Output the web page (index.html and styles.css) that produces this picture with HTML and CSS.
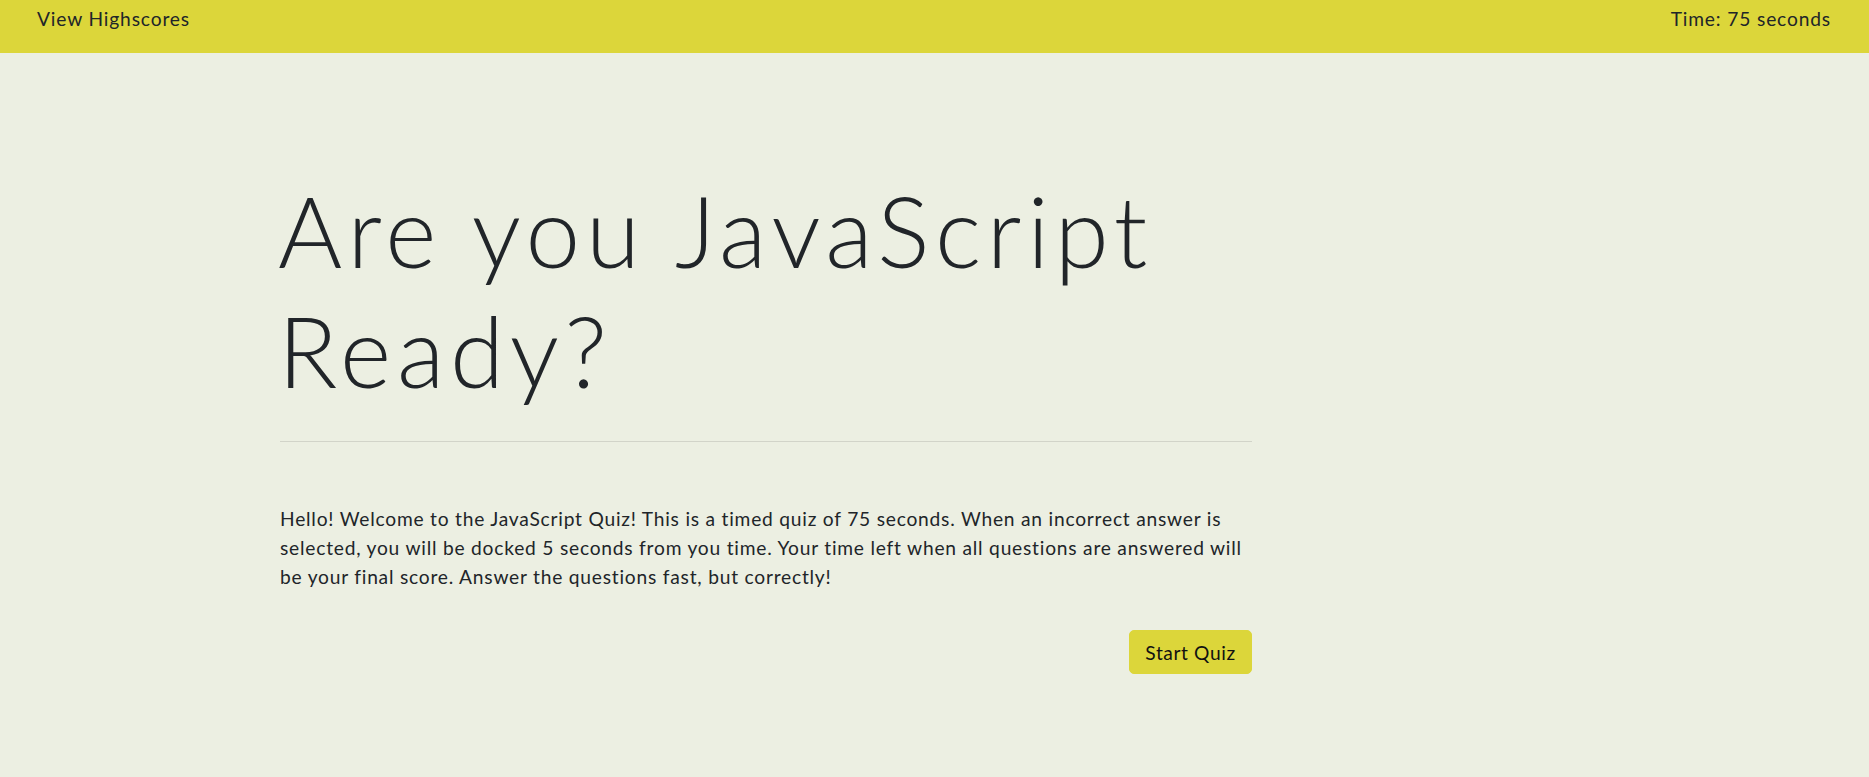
FILE: index.html
```html
<!DOCTYPE html>
<html lang="en">
<head>
<meta charset="utf-8">
<title>JavaScript Quiz</title>
<link rel="stylesheet" href="styles.css">
</head>
<body>
<header class="navbar">
  <a class="nav-link" href="#">View Highscores</a>
  <span class="timer">Time: 75 seconds</span>
</header>
<main class="content">
  <h1 class="title">Are you JavaScript Ready?</h1>
  <hr class="divider">
  <p class="intro">Hello! Welcome to the JavaScript Quiz! This is a timed quiz of 75 seconds. When an incorrect answer is selected, you will be docked 5 seconds from you time. Your time left when all questions are answered will be your final score. Answer the questions fast, but correctly!</p>
  <div class="actions">
    <button class="btn-start" type="button">Start Quiz</button>
  </div>
</main>
</body>
</html>
```
FILE: styles.css
```css
html, body {
  margin: 0;
  padding: 0;
}
body {
  background: #ecefe2;
  color: #212529;
  font-family: "Lato", "Open Sans", sans-serif;
  min-height: 777px;
}
.navbar {
  height: 53px;
  background: #dcd63a;
  display: flex;
  justify-content: space-between;
  align-items: center;
  padding: 0 38px 16px 37px;
  box-sizing: border-box;
  font-size: 19.2px;
  letter-spacing: 0.85px;
}
.nav-link {
  color: #212529;
  text-decoration: none;
}
.timer {
  color: #212529;
}
.content {
  margin-left: 280px;
  width: 972px;
  padding-top: 117px;
}
.title {
  font-size: 98px;
  font-weight: 300;
  line-height: 120px;
  letter-spacing: 5.7px;
  margin: 0 0 0 -2px;
}
.divider {
  border: 0;
  border-top: 1px solid #d2d4c9;
  margin: 31px 0 0 0;
}
.intro {
  font-size: 19.2px;
  line-height: 28.8px;
  letter-spacing: 0.78px;
  margin: 63px 0 0 0;
}
.actions {
  display: flex;
  justify-content: flex-end;
  margin-top: 39px;
}
.btn-start {
  background: #dcd63a;
  border: 1px solid #dcd63a;
  border-radius: 5px;
  color: #111;
  font-family: inherit;
  font-size: 19.2px;
  letter-spacing: 0.6px;
  width: 123px;
  height: 44px;
  padding: 0;
}
```
